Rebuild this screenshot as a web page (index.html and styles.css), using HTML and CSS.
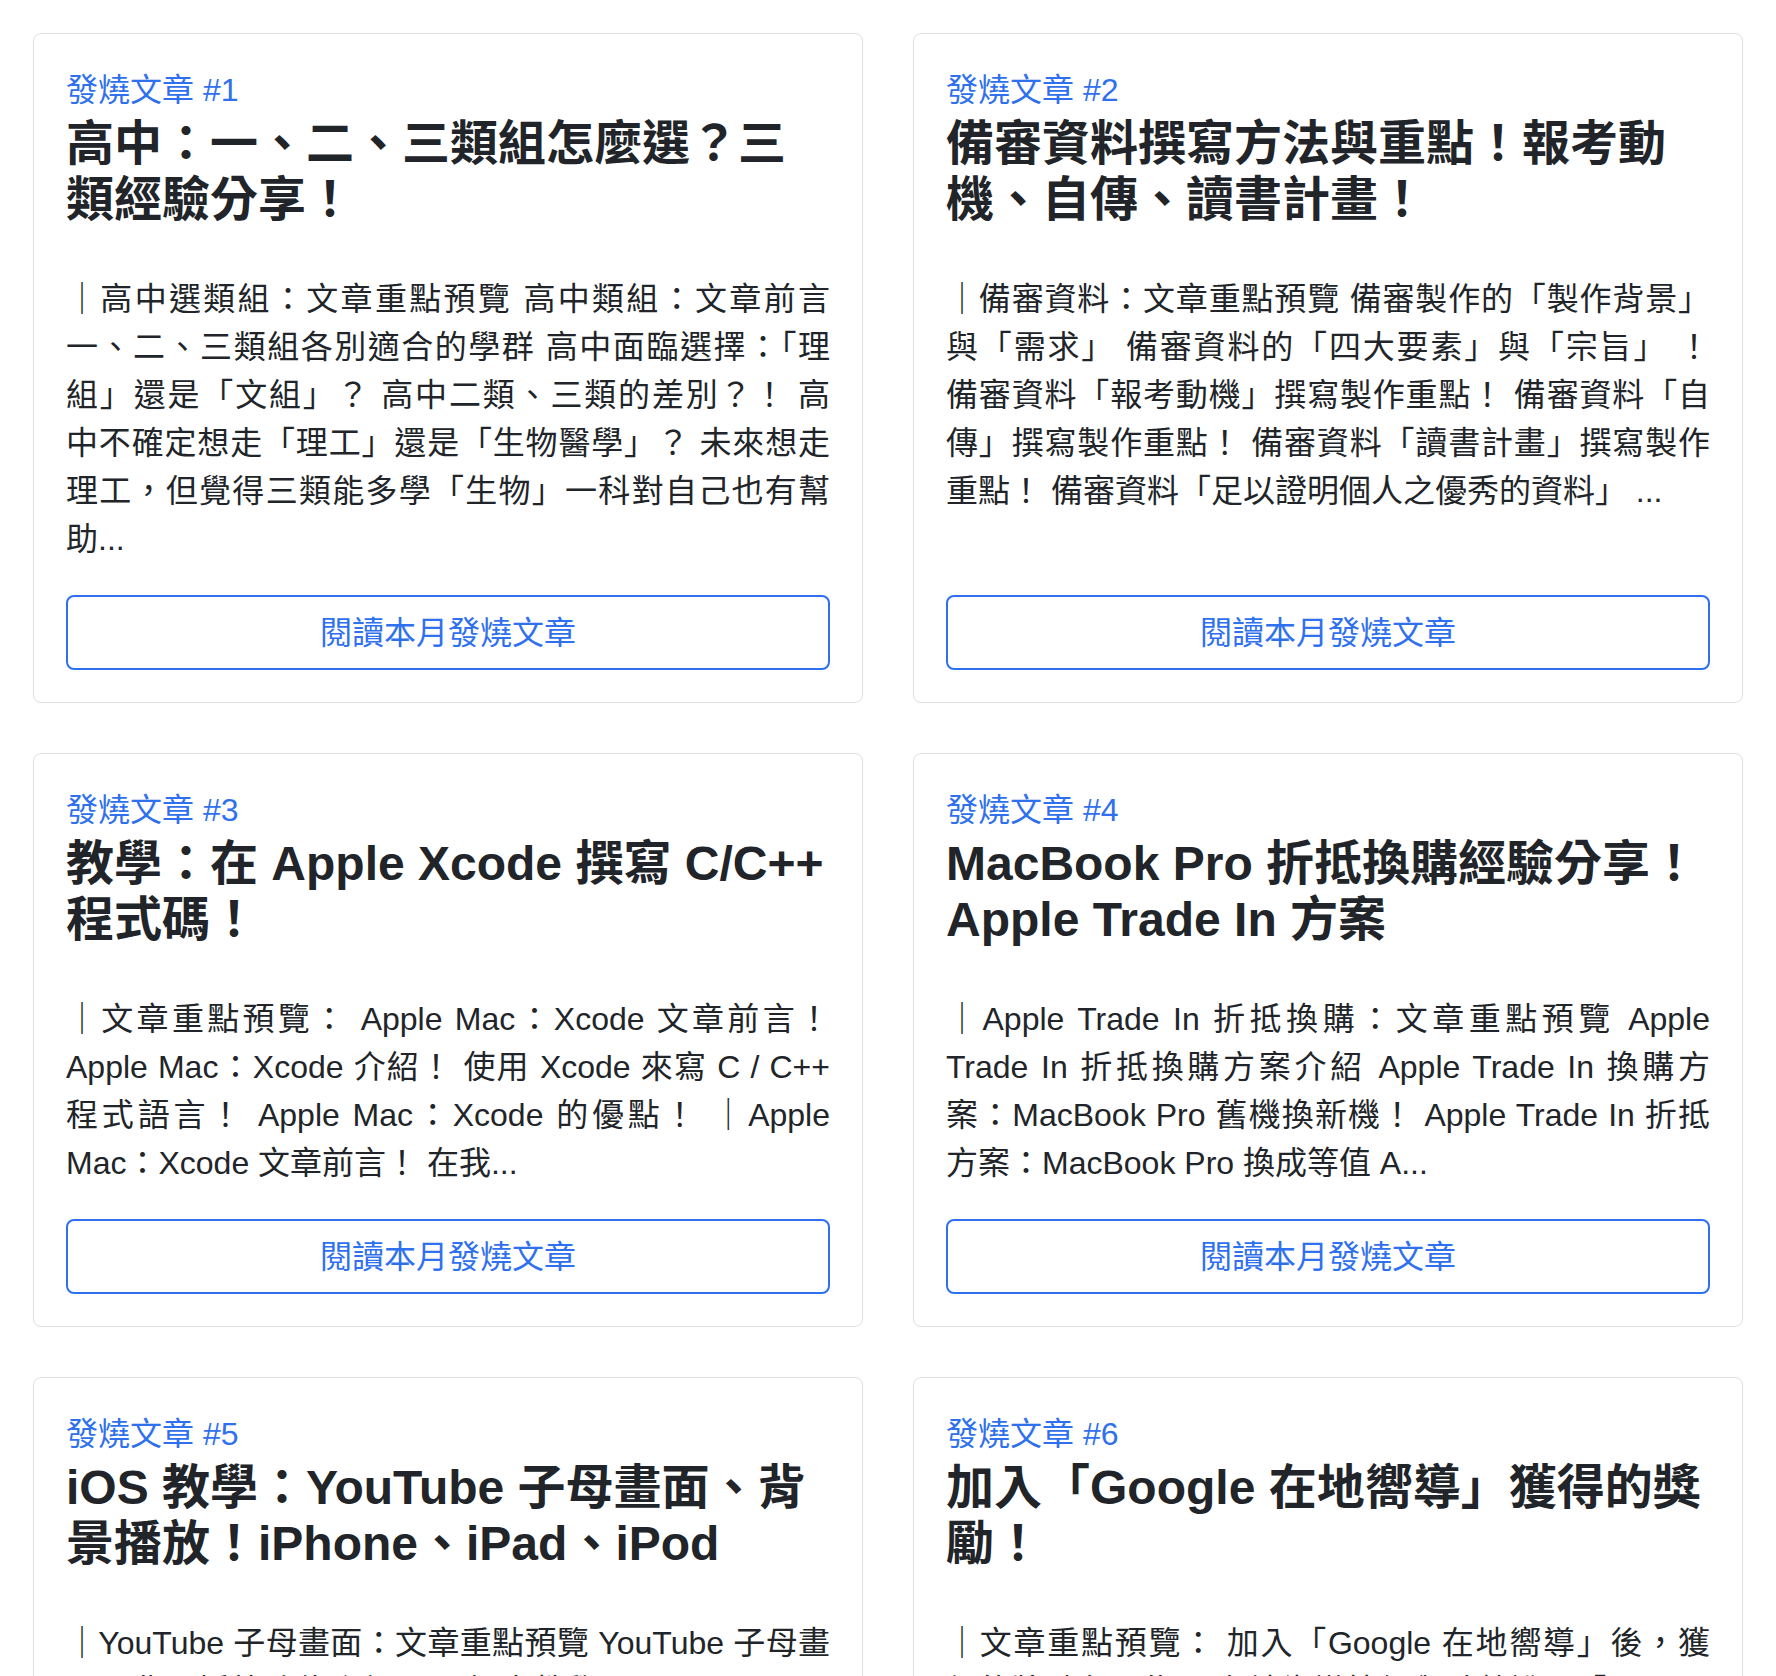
FILE: index.html
```html
<!DOCTYPE html>
<html lang="zh-Hant">
<head>
<meta charset="utf-8">
<title>本月發燒文章</title>
<link rel="stylesheet" href="styles.css">
</head>
<body>
<main class="grid">
  <article class="card">
    <div class="card-label">發燒文章 #1</div>
    <h2 class="card-title">高中：一、二、三類組怎麼選？三類經驗分享！</h2>
    <p class="card-text">
      <span class="line">｜高中選類組：文章重點預覽 高中類組：文章前言</span>
      <span class="line">一、二、三類組各別適合的學群 高中面臨選擇：「理</span>
      <span class="line">組」還是「文組」？ 高中二類、三類的差別？！ 高</span>
      <span class="line">中不確定想走「理工」還是「生物醫學」？ 未來想走</span>
      <span class="line">理工，但覺得三類能多學「生物」一科對自己也有幫</span>
      <span class="line line-last">助...</span>
    </p>
    <a class="btn" href="#">閱讀本月發燒文章</a>
  </article>

  <article class="card">
    <div class="card-label">發燒文章 #2</div>
    <h2 class="card-title">備審資料撰寫方法與重點！報考動機、自傳、讀書計畫！</h2>
    <p class="card-text">
      <span class="line">｜備審資料：文章重點預覽 備審製作的「製作背景」</span>
      <span class="line">與「需求」 備審資料的「四大要素」與「宗旨」 ！</span>
      <span class="line">備審資料「報考動機」撰寫製作重點！ 備審資料「自</span>
      <span class="line">傳」撰寫製作重點！ 備審資料「讀書計畫」撰寫製作</span>
      <span class="line line-last">重點！ 備審資料「足以證明個人之優秀的資料」 ...</span>
    </p>
    <a class="btn" href="#">閱讀本月發燒文章</a>
  </article>

  <article class="card">
    <div class="card-label">發燒文章 #3</div>
    <h2 class="card-title">教學：在 Apple Xcode 撰寫 C/C++ 程式碼！</h2>
    <p class="card-text">
      <span class="line">｜文章重點預覽： Apple Mac：Xcode 文章前言！</span>
      <span class="line">Apple Mac：Xcode 介紹！ 使用 Xcode 來寫 C / C++</span>
      <span class="line">程式語言！ Apple Mac：Xcode 的優點！ ｜Apple</span>
      <span class="line line-last">Mac：Xcode 文章前言！ 在我...</span>
    </p>
    <a class="btn" href="#">閱讀本月發燒文章</a>
  </article>

  <article class="card">
    <div class="card-label">發燒文章 #4</div>
    <h2 class="card-title">MacBook Pro 折抵換購經驗分享！Apple Trade In 方案</h2>
    <p class="card-text">
      <span class="line">｜Apple Trade In 折抵換購：文章重點預覽 Apple</span>
      <span class="line">Trade In 折抵換購方案介紹 Apple Trade In 換購方</span>
      <span class="line">案：MacBook Pro 舊機換新機！ Apple Trade In 折抵</span>
      <span class="line line-last">方案：MacBook Pro 換成等值 A...</span>
    </p>
    <a class="btn" href="#">閱讀本月發燒文章</a>
  </article>

  <article class="card">
    <div class="card-label">發燒文章 #5</div>
    <h2 class="card-title">iOS 教學：YouTube 子母畫面、背景播放！iPhone、iPad、iPod</h2>
    <p class="card-text">
      <span class="line">｜YouTube 子母畫面：文章重點預覽 YouTube 子母畫</span>
      <span class="line">面、背景播放功能介紹 iOS 設定教學：iPhone、iPad</span>
      <span class="line line-last">、iPod 都能使用...</span>
    </p>
    <a class="btn" href="#">閱讀本月發燒文章</a>
  </article>

  <article class="card">
    <div class="card-label">發燒文章 #6</div>
    <h2 class="card-title">加入「Google 在地嚮導」獲得的獎勵！</h2>
    <p class="card-text">
      <span class="line">｜文章重點預覽： 加入「Google 在地嚮導」後，獲</span>
      <span class="line">得的獎勵有哪些？ 在地嚮導等級與點數說明「Google</span>
      <span class="line line-last">地圖」評論...</span>
    </p>
    <a class="btn" href="#">閱讀本月發燒文章</a>
  </article>
</main>
</body>
</html>
```

FILE: styles.css
```css
* {
  box-sizing: border-box;
}

body {
  margin: 0;
  background: #ffffff;
  color: #212529;
  font-family: "Liberation Sans", "Noto Sans CJK TC", sans-serif;
}

.grid {
  display: grid;
  grid-template-columns: 1fr 1fr;
  gap: 50px;
  padding: 33px;
}

.card {
  display: flex;
  flex-direction: column;
  border: 1px solid #dfdfdf;
  border-radius: 8px;
  padding: 32px;
  background: #fff;
}

.card-label {
  font-size: 32px;
  line-height: 48px;
  color: #2f70ef;
}

.card-title {
  margin: 2px 0 47px;
  font-size: 48px;
  line-height: 56px;
  font-weight: 700;
  color: #212529;
}

.card-text {
  margin: 0 0 32px;
  font-size: 32px;
  line-height: 48px;
}

.line {
  display: block;
  text-align: justify;
  text-align-last: justify;
}

.line-last {
  text-align-last: auto;
}

.btn {
  display: block;
  margin-top: auto;
  padding: 11.5px 16px;
  border: 2px solid #2f70ef;
  border-radius: 8px;
  color: #2f70ef;
  font-size: 32px;
  line-height: 48px;
  text-align: center;
  text-decoration: none;
}
```
